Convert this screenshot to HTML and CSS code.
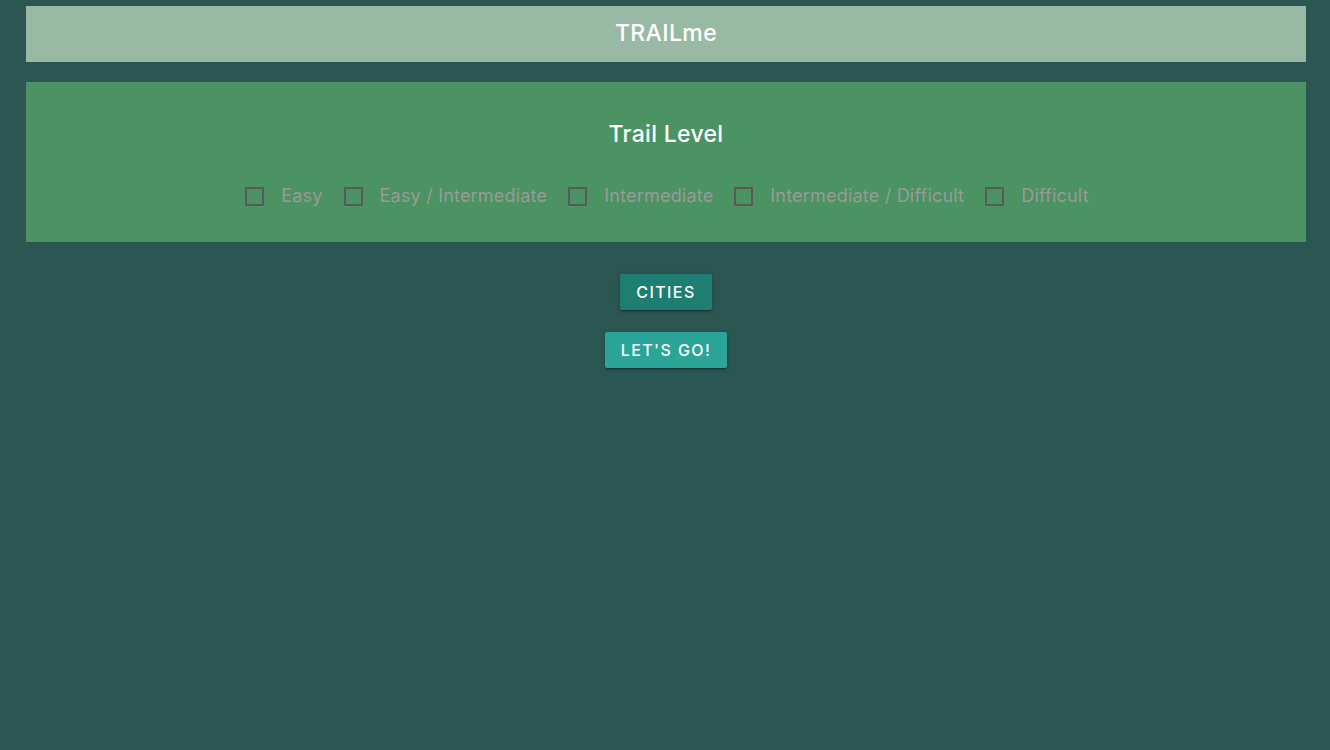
FILE: index.html
```html
<!DOCTYPE html>
<html>
<head>
<meta charset="utf-8">
<link rel="stylesheet" href="styles.css">
</head>
<body>
  <header class="topbar">TRAILme</header>
  <section class="panel">
    <h2 class="panel-title">Trail Level</h2>
    <div class="levels">
      <label class="level"><span class="box"></span><span class="level-text">Easy</span></label>
      <label class="level"><span class="box"></span><span class="level-text">Easy / Intermediate</span></label>
      <label class="level"><span class="box"></span><span class="level-text">Intermediate</span></label>
      <label class="level"><span class="box"></span><span class="level-text">Intermediate / Difficult</span></label>
      <label class="level"><span class="box"></span><span class="level-text">Difficult</span></label>
    </div>
  </section>
  <div class="actions">
    <button class="btn btn-dark">Cities</button>
    <button class="btn btn-light">Let's go!</button>
  </div>
</body>
</html>
```
FILE: styles.css
```css
html, body {
  margin: 0;
  height: 100%;
}
body {
  background: #2c5652;
  padding: 6px 24px 0 26px;
  box-sizing: border-box;
  font-family: Inter, Roboto, "Noto Sans", sans-serif;
}
.topbar {
  height: 56px;
  background: #98baa5;
  color: #ffffff;
  font-size: 23px;
  font-weight: 500;
  letter-spacing: 0.4px;
  display: flex;
  align-items: center;
  justify-content: center;
  padding-bottom: 2px;
  box-sizing: border-box;
}
.panel {
  margin-top: 20px;
  height: 160px;
  background: #4b9362;
  box-sizing: border-box;
  padding-top: 38px;
  display: flex;
  flex-direction: column;
  align-items: center;
}
.panel-title {
  margin: 0;
  color: #ffffff;
  font-size: 23px;
  font-weight: 500;
  letter-spacing: 0.3px;
  line-height: 28px;
}
.levels {
  margin-top: 37px;
  display: flex;
  gap: 21px;
  padding-left: 2px;
}
.level {
  display: flex;
  align-items: center;
  gap: 17px;
  color: #9a9a9a;
  font-size: 18px;
  letter-spacing: 0.2px;
  line-height: 22px;
}
.box {
  width: 19px;
  height: 19px;
  box-sizing: border-box;
  border: 2px solid #5a5a5a;
  border-radius: 1px;
}
.actions {
  margin-top: 32px;
  display: flex;
  flex-direction: column;
  align-items: center;
  gap: 22px;
}
.btn {
  height: 36px;
  padding: 0 16px;
  border: none;
  border-radius: 2px;
  color: #ffffff;
  font-family: Inter, Roboto, sans-serif;
  font-size: 16px;
  font-weight: 500;
  letter-spacing: 1.4px;
  text-transform: uppercase;
  box-shadow: 0 2px 2px 0 rgba(0,0,0,0.14), 0 1px 5px 0 rgba(0,0,0,0.12), 0 3px 1px -2px rgba(0,0,0,0.2);
}
.btn-dark {
  background: #1f7e72;
}
.btn-light {
  background: #2aa597;
}
```
